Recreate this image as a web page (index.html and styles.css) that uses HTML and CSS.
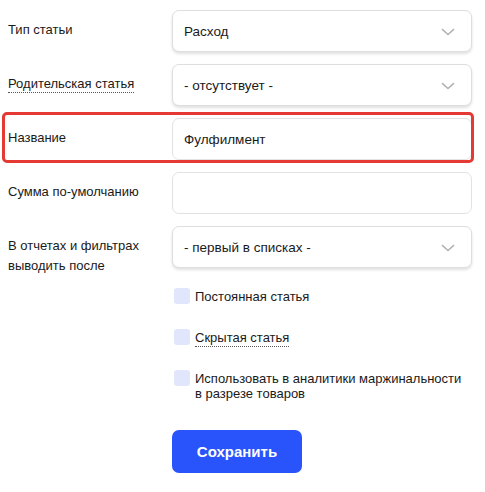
FILE: index.html
```html
<!DOCTYPE html>
<html lang="ru">
<head>
<meta charset="utf-8">
<link rel="stylesheet" href="styles.css">
</head>
<body>
<form class="form">
  <div class="row">
    <div class="label">Тип статьи</div>
    <div class="field select"><span>Расход</span><svg class="chev" viewBox="0 0 14 8" width="14" height="8"><path d="M1 1.2 L7 6.5 L13 1.2" fill="none" stroke="#b3b3b3" stroke-width="1.6"/></svg></div>
  </div>
  <div class="row">
    <div class="label"><span class="dotted">Родительская статья</span></div>
    <div class="field select"><span>- отсутствует -</span><svg class="chev" viewBox="0 0 14 8" width="14" height="8"><path d="M1 1.2 L7 6.5 L13 1.2" fill="none" stroke="#b3b3b3" stroke-width="1.6"/></svg></div>
  </div>
  <div class="row highlighted">
    <div class="label">Название</div>
    <div class="field input"><span>Фулфилмент</span></div>
  </div>
  <div class="row">
    <div class="label">Сумма по-умолчанию</div>
    <div class="field input"></div>
  </div>
  <div class="row">
    <div class="label">В отчетах и фильтрах<br>выводить после</div>
    <div class="field select"><span>- первый в списках -</span><svg class="chev" viewBox="0 0 14 8" width="14" height="8"><path d="M1 1.2 L7 6.5 L13 1.2" fill="none" stroke="#b3b3b3" stroke-width="1.6"/></svg></div>
  </div>
  <div class="checks">
    <label class="check"><span class="box"></span><span class="ctext">Постоянная статья</span></label>
    <label class="check"><span class="box"></span><span class="ctext"><span class="dotted">Скрытая статья</span></span></label>
    <label class="check"><span class="box"></span><span class="ctext">Использовать в аналитики маржинальности<br>в разрезе товаров</span></label>
  </div>
  <div class="actions">
    <button type="button" class="save">Сохранить</button>
  </div>
</form>
</body>
</html>
```
FILE: styles.css
```css
* { box-sizing: border-box; }
html, body { margin: 0; padding: 0; background: #fff; }
body {
  font-family: "Liberation Sans", Arial, sans-serif;
  font-size: 13px;
  color: #1a1a1a;
}
.form {
  padding: 10px 13px 0 8px;
  display: flex;
  flex-direction: column;
  gap: 12px;
}
.row {
  display: flex;
  position: relative;
  height: 42px;
}
.label {
  width: 164px;
  flex: none;
  padding-top: 10px;
  line-height: 20px;
}
.dotted {
  border-bottom: 1px dotted #555;
  padding-bottom: 1px;
}
.field {
  width: 300px;
  height: 42px;
  border: 1px solid #dedede;
  border-radius: 7px;
  background: #fff;
  display: flex;
  align-items: center;
  padding: 0 16px 0 11px;
  font-size: 13.5px;
}
.select {
  justify-content: space-between;
  box-shadow: 0 2px 3px rgba(0, 0, 0, 0.12);
}
.input { border-color: #e2e2e2; }
.chev { display: block; margin-top: 1px; }
.highlighted::before {
  content: "";
  position: absolute;
  left: -6px;
  right: -2px;
  top: -6px;
  bottom: -3px;
  border: 3px solid #e53a33;
  border-radius: 5px;
  pointer-events: none;
}
.checks {
  margin-top: 8px;
  padding-left: 166px;
  display: flex;
  flex-direction: column;
  gap: 25px;
}
.check {
  display: flex;
  align-items: flex-start;
  gap: 5px;
  line-height: 16px;
}
.box {
  width: 16px;
  height: 16px;
  flex: none;
  background: #e1e6fc;
  border-radius: 3px;
}
.ctext { line-height: 15px; padding-top: 1px; }
.actions {
  margin-top: 17px;
  padding-left: 164px;
}
.save {
  width: 130px;
  height: 43px;
  border: none;
  border-radius: 7px;
  background: #2a54fb;
  color: #fff;
  font-family: "Liberation Sans", Arial, sans-serif;
  font-weight: bold;
  font-size: 15px;
}
```
